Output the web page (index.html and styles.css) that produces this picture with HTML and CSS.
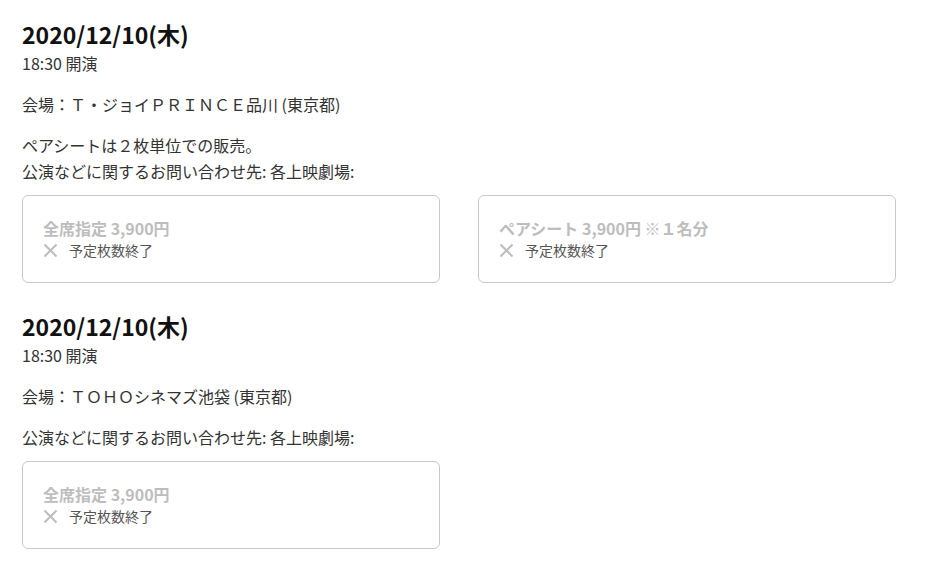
FILE: index.html
```html
<!DOCTYPE html>
<html lang="ja">
<head>
<meta charset="utf-8">
<title>公演日程</title>
<link rel="stylesheet" href="styles.css">
</head>
<body>
<main class="page">
  <section class="show">
    <h2 class="show-date">2020/12/10(木)</h2>
    <p class="show-time">18:30 開演</p>
    <p class="para">会場：Ｔ・ジョイＰＲＩＮＣＥ品川 (東京都)</p>
    <p class="para">ペアシートは２枚単位での販売。<br>公演などに関するお問い合わせ先: 各上映劇場:</p>
    <div class="tickets">
      <div class="ticket">
        <div class="ticket-name">全席指定 3,900円</div>
        <div class="ticket-status">
          <svg class="x-icon" viewBox="0 0 15 15" width="15" height="15"><path d="M1.5 1.5 L13.5 13.5 M13.5 1.5 L1.5 13.5" stroke="#bdbdbd" stroke-width="2" fill="none"/></svg>
          <span>予定枚数終了</span>
        </div>
      </div>
      <div class="ticket">
        <div class="ticket-name">ペアシート 3,900円 ※１名分</div>
        <div class="ticket-status">
          <svg class="x-icon" viewBox="0 0 15 15" width="15" height="15"><path d="M1.5 1.5 L13.5 13.5 M13.5 1.5 L1.5 13.5" stroke="#bdbdbd" stroke-width="2" fill="none"/></svg>
          <span>予定枚数終了</span>
        </div>
      </div>
    </div>
  </section>
  <section class="show">
    <h2 class="show-date">2020/12/10(木)</h2>
    <p class="show-time">18:30 開演</p>
    <p class="para">会場：ＴＯＨＯシネマズ池袋 (東京都)</p>
    <p class="para">公演などに関するお問い合わせ先: 各上映劇場:</p>
    <div class="tickets">
      <div class="ticket">
        <div class="ticket-name">全席指定 3,900円</div>
        <div class="ticket-status">
          <svg class="x-icon" viewBox="0 0 15 15" width="15" height="15"><path d="M1.5 1.5 L13.5 13.5 M13.5 1.5 L1.5 13.5" stroke="#bdbdbd" stroke-width="2" fill="none"/></svg>
          <span>予定枚数終了</span>
        </div>
      </div>
    </div>
  </section>
</main>
</body>
</html>
```
FILE: styles.css
```css
html, body {
  margin: 0;
  padding: 0;
  background: #fff;
}
body {
  font-family: "Noto Sans CJK JP", "Noto Sans", sans-serif;
  color: #333;
  font-size: 16px;
  line-height: 26px;
}
.page {
  padding: 18px 31px 0 22px;
}
.show + .show {
  margin-top: 27px;
}
.show-date {
  margin: 0;
  font-size: 23px;
  line-height: 32px;
  font-weight: 700;
  color: #111;
}
.show-time {
  margin: 0;
}
.para {
  margin: 15px 0 0;
}
.tickets {
  margin-top: 11px;
  display: grid;
  grid-template-columns: 1fr 1fr;
  column-gap: 38px;
}
.ticket {
  border: 1px solid #c9c9c9;
  border-radius: 6px;
  padding: 21px 20px;
}
.ticket-name {
  font-size: 16px;
  line-height: 22px;
  font-weight: 700;
  color: #bdbdbd;
}
.ticket-status {
  display: flex;
  align-items: center;
  gap: 11px;
  font-size: 14px;
  line-height: 22px;
  color: #555;
}
.x-icon {
  display: block;
  flex: none;
}
```
